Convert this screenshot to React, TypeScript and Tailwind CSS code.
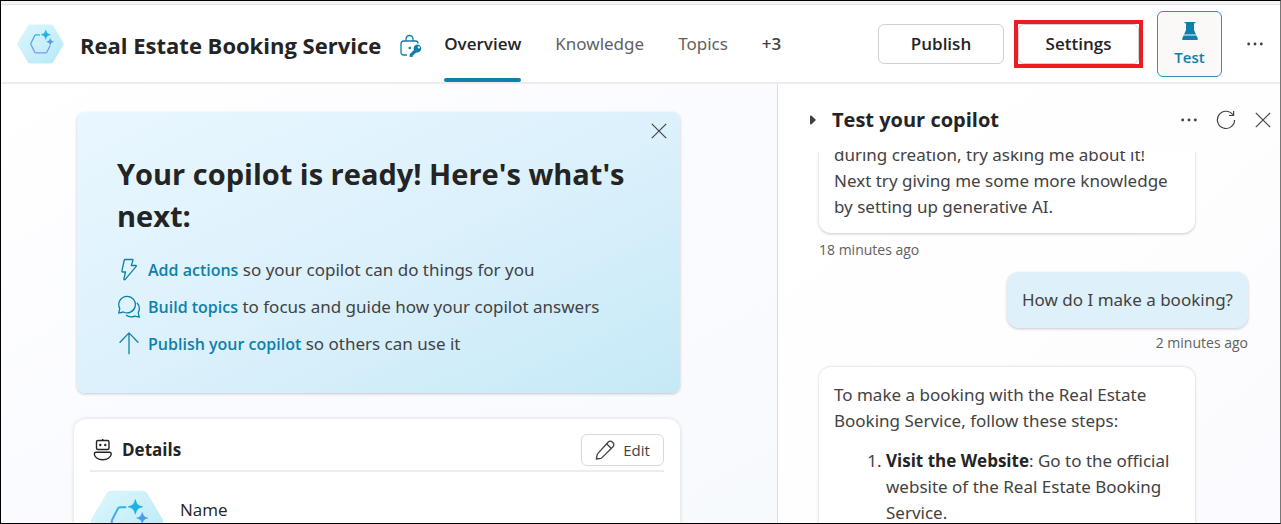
import type { ReactNode } from "react";

type IconProps = { className?: string };

function CopilotLogo({ className, id }: IconProps & { id: string }) {
  return (
    <svg viewBox="0 0 47 40" className={className} aria-hidden="true">
      <defs>
        <linearGradient id={`${id}-bg`} x1="0" y1="0" x2="1" y2="1">
          <stop offset="0" stopColor="#def6fc" />
          <stop offset="1" stopColor="#b5e9f8" />
        </linearGradient>
        <linearGradient id={`${id}-line`} x1="0" y1="0" x2="0" y2="1">
          <stop offset="0" stopColor="#2db4e6" />
          <stop offset="1" stopColor="#8b8ff5" />
        </linearGradient>
      </defs>
      <path
        d="M13.5 0.5h20c1.4 0 2.3.5 3 1.700l9.500 16c.6 1.200.6 2.400 0 3.600l-9.500 16c-.7 1.200-1.600 1.700-3 1.700h-20c-1.400 0-2.300-.5-3-1.700l-9.500-16c-.6-1.200-.6-2.400 0-3.600l9.500-16c.7-1.200 1.600-1.700 3-1.700z"
        fill={`url(#${id}-bg)`}
      />
      <path
        d="M22.500 10.900h-3.300c-.7 0-1.200.3-1.500.9l-3.700 7.200c-.3.600-.3 1.200 0 1.800l3.700 7.200c.3.600.8.900 1.500.9h9.200c.7 0 1.200-.3 1.500-.9l3-6"
        fill="none"
        stroke={`url(#${id}-line)`}
        strokeWidth="1.300"
        strokeLinecap="round"
      />
      <path
        d="M28.800 6.100c.8 3 1.500 3.800 4.600 4.600-3.100.8-3.800 1.600-4.600 4.600-.8-3-1.500-3.800-4.600-4.600 3.100-.8 3.800-1.600 4.600-4.600z"
        fill="#21b0e3"
        stroke="#21b0e3"
        strokeWidth="0.500"
      />
      <path
        d="M33.200 14.300c.6 2.300 1.200 2.900 3.500 3.500-2.300.6-2.900 1.200-3.500 3.500-.6-2.300-1.200-2.900-3.500-3.500 2.300-.6 2.900-1.200 3.500-3.500z"
        fill="#4a9bea"
        stroke="#4a9bea"
        strokeWidth="0.400"
      />
    </svg>
  );
}

function LockKeyIcon({ className }: IconProps) {
  return (
    <svg viewBox="0 0 24 24" className={className} fill="none" aria-hidden="true">
      <path
        d="M8 21H4.500A2.500 2.500 0 0 1 2 18.500v-9A2.500 2.500 0 0 1 4.500 7h12A2.500 2.500 0 0 1 19 9.500M7 7V5a3.500 3.500 0 0 1 7 0v2"
        stroke="currentColor"
        strokeWidth="1.300"
      />
      <circle cx="10.800" cy="14" r="1.300" fill="currentColor" />
      <path
        fillRule="evenodd"
        d="M18.500 10.500a4 4 0 1 1-1.100 7.900L16 19.800h-.9v1.400h-1.400v1.300c0 .3-.2.500-.5.500h-2c-.3 0-.5-.2-.5-.5v-2.200l4.200-4.300a4 4 0 0 1 3.600-5.500zm1.300 1.800a1.100 1.100 0 1 0 0 2.200 1.100 1.100 0 0 0 0-2.200z"
        fill="currentColor"
      />
    </svg>
  );
}

function BeakerIcon({ className }: IconProps) {
  return (
    <svg viewBox="0 0 20 20" className={className} fill="currentColor" aria-hidden="true">
      <path d="M4.500 1h11v1.300H14V9l2 4.500H4L6 9V2.300H4.500z" />
      <path d="M3.500 14.500h13l1.300 3c.3.800-.2 1.500-1 1.500H3.200c-.8 0-1.300-.7-1-1.500z" />
    </svg>
  );
}

function MoreIcon({ className }: IconProps) {
  return (
    <svg viewBox="0 0 20 20" className={className} fill="currentColor" aria-hidden="true">
      <circle cx="3" cy="10" r="1.600" />
      <circle cx="10" cy="10" r="1.600" />
      <circle cx="17" cy="10" r="1.600" />
    </svg>
  );
}

function CloseIcon({ className }: IconProps) {
  return (
    <svg viewBox="0 0 20 20" className={className} fill="none" stroke="currentColor" strokeWidth="1.300" aria-hidden="true">
      <path d="M2 2l16 16M18 2L2 18" />
    </svg>
  );
}

function RefreshIcon({ className }: IconProps) {
  return (
    <svg viewBox="0 0 20 20" className={className} fill="none" stroke="currentColor" strokeWidth="1.200" aria-hidden="true">
      <path d="M16.800 4.600A8.600 8.600 0 1 0 18.600 10" />
      <path d="M17.600 1v4.500H13" />
    </svg>
  );
}

function BoltIcon({ className }: IconProps) {
  return (
    <svg viewBox="0 0 24 24" className={className} fill="none" stroke="currentColor" strokeWidth="1.300" strokeLinejoin="round" aria-hidden="true">
      <path d="M8 1.500h7.500c.4 0 .6.300.5.600L14.300 7.500h4.500c.5 0 .7.500.4.900L8 21.600c-.5.500-1.300.1-1.100-.6L8.500 14H5.700c-.6 0-1-.5-.8-1.100L7.300 2C7.400 1.700 7.700 1.500 8 1.500z" />
    </svg>
  );
}

function ChatIcon({ className }: IconProps) {
  return (
    <svg viewBox="0 0 24 24" className={className} fill="none" stroke="currentColor" strokeWidth="1.300" strokeLinejoin="round" aria-hidden="true">
      <path d="M10 1.300a8.300 8.300 0 1 1-3.700 15.700L1.700 18.100l1.100-4.500A8.300 8.300 0 0 1 10 1.300z" />
      <path d="M9 20c1.400 1.200 3.200 1.900 5.200 1.900 1.300 0 2.500-.3 3.600-.8l4.500 1-1.100-4.400c1.700-3.400 1.300-7.300-1.300-9.900" />
    </svg>
  );
}

function ArrowUpIcon({ className }: IconProps) {
  return (
    <svg viewBox="0 0 24 24" className={className} fill="none" stroke="currentColor" strokeWidth="1.300" strokeLinecap="round" strokeLinejoin="round" aria-hidden="true">
      <path d="M12 21.700V1.200M3 10.200l9-9.300 9 9.300" />
    </svg>
  );
}

function BotIcon({ className }: IconProps) {
  return (
    <svg viewBox="0 0 24 24" className={className} fill="none" stroke="currentColor" strokeWidth="1.400" aria-hidden="true">
      <rect x="6.500" y="2.500" width="12.500" height="9" rx="1.500" />
      <path d="M12.700 1v1.500" />
      <path d="M6 14.300h13.500c1 0 1.700.7 1.700 1.700 0 3-3.600 5.800-8.500 5.800S4.300 19 4.300 16c0-1 .7-1.700 1.700-1.700z" />
      <circle cx="10.300" cy="7" r="1.200" fill="currentColor" stroke="none" />
      <circle cx="15.300" cy="7" r="1.200" fill="currentColor" stroke="none" />
    </svg>
  );
}

function PencilIcon({ className }: IconProps) {
  return (
    <svg viewBox="0 0 20 20" className={className} fill="none" stroke="currentColor" strokeWidth="1.300" strokeLinejoin="round" aria-hidden="true">
      <path d="M13.300 2a2.700 2.700 0 0 1 3.900 0l.8.800a2.700 2.700 0 0 1 0 3.900L7 17.600c-.4.400-.9.700-1.400.800L1.300 19l.9-4.200c.1-.5.400-1 .8-1.400z" />
      <path d="M11.600 3.800l4.700 4.700" />
    </svg>
  );
}

const steps: { icon: ReactNode; link: string; text: string }[] = [
  { icon: <BoltIcon className="size-6" />, link: "Add actions", text: "so your copilot can do things for you" },
  { icon: <ChatIcon className="size-6" />, link: "Build topics", text: "to focus and guide how your copilot answers" },
  { icon: <ArrowUpIcon className="size-6" />, link: "Publish your copilot", text: "so others can use it" },
];

function Header() {
  return (
    <header className="flex h-[79px] shrink-0 items-stretch border-b-2 border-[#ededed] bg-white pl-4 pr-4">
      <div className="flex items-center">
        <CopilotLogo id="brand" className="h-10 w-[47px]" />
        <h1 className="ml-4 whitespace-nowrap pt-[3px] text-[22px] font-bold text-[#242424]">Real Estate Booking Service</h1>
        <LockKeyIcon className="ml-[18px] mt-1 size-6 text-[#0f7fa8]" />
      </div>
      <nav className="ml-[21px] flex items-stretch gap-[34px] whitespace-nowrap text-[17px] text-[#616161]" aria-label="Copilot sections">
        <a href="#overview" className="flex flex-col justify-between pt-[26px] font-['Open_Sans',sans-serif] font-semibold text-[#242424]" aria-current="page">
          Overview
          <span className="h-1 rounded-full bg-[#0f80aa]" />
        </a>
        <a href="#knowledge" className="flex items-center font-['Noto_Sans',sans-serif]">Knowledge</a>
        <a href="#topics" className="flex items-center font-['Noto_Sans',sans-serif]">Topics</a>
        <button type="button" className="font-semibold text-[#424242]">+3</button>
      </nav>
      <div className="ml-auto flex items-center text-[17px] font-semibold text-[#242424]">
        <button type="button" className="h-10 w-[126px] rounded-md border border-[#d1d1d1] bg-white">Publish</button>
        <div className="ml-[10px] border-4 border-[#ec1c24]">
          <button type="button" className="block h-10 w-[121px] rounded-md border border-[#d1d1d1] bg-white">Settings</button>
        </div>
        <button type="button" className="ml-[14px] flex h-[66px] w-[65px] flex-col items-center justify-center gap-[5px] rounded-md border border-[#2f93b8] bg-[#faf9f8] pt-[2px] text-[15px] text-[#0f80aa]">
          <BeakerIcon className="size-5" />
          <span>Test</span>
        </button>
        <button type="button" aria-label="More options" className="ml-6 text-[#424242]">
          <MoreIcon className="size-[18px]" />
        </button>
      </div>
    </header>
  );
}

function Overview() {
  return (
    <main className="min-w-0 flex-1 overflow-hidden bg-linear-to-br from-white via-[#fafbff] to-[#f7fafd] pl-[73px] pr-[97px] pt-7">
      <section className="ml-[3px] flex items-start rounded-lg bg-linear-to-br from-[#e9f7ff] via-[#dcf1fc] to-[#c6e9f7] pb-[31px] pl-10 pr-3 pt-[10px] shadow-[0_1px_3px_rgba(0,0,0,0.22)]">
        <div className="flex-1 pt-[31px]">
          <h2 className="text-[29px] font-bold leading-[42px] text-[#242424]">Your copilot is ready! Here's what's next:</h2>
          <ul className="mt-[14px] text-[17px] leading-[37px] text-[#424242]">
            {steps.map((step) => (
              <li key={step.link} className="flex items-center gap-[7px]">
                <span className="text-[#0f80aa]">{step.icon}</span>
                <span className="font-['Noto_Sans',sans-serif]">
                  <a href="#next" className="font-['Open_Sans',sans-serif] text-base font-semibold text-[#0f80aa]">{step.link}</a> {step.text}
                </span>
              </li>
            ))}
          </ul>
        </div>
        <button type="button" aria-label="Dismiss" className="text-[#424242]">
          <CloseIcon className="size-[18px]" />
        </button>
      </section>
      <section className="mt-[26px] h-60 rounded-xl bg-white px-4 pt-[15px] shadow-[0_0_4px_rgba(0,0,0,0.14)]">
        <div className="flex items-center justify-between border-b-2 border-[#ededed] pb-1">
          <h3 className="flex items-center gap-2 text-[17px] font-bold text-[#242424]">
            <BotIcon className="size-6" />
            Details
          </h3>
          <button type="button" className="flex h-8 w-[83px] items-center justify-center gap-2 rounded-md border border-[#d9d9d9] text-[15px] text-[#424242]">
            <PencilIcon className="size-5" />
            Edit
          </button>
        </div>
        <div className="flex items-start gap-4 pt-[18px]">
          <CopilotLogo id="details" className="h-[63px] w-[74px]" />
          <p className="pt-2 text-[17px] font-medium leading-6 text-[#242424]">Name</p>
        </div>
      </section>
    </main>
  );
}

function TestPane() {
  return (
    <aside className="flex w-[503px] shrink-0 flex-col overflow-hidden border-l border-[#dedede] bg-linear-to-br from-white via-[#fefefe] to-[#fafaff]">
      <div className="flex h-[67px] shrink-0 items-center pl-8 pr-2 pt-[5px] text-[#424242]">
        <svg viewBox="0 0 6 10" className="h-[10px] w-[6px]" fill="currentColor" aria-hidden="true">
          <path d="M0 1.500c0-1 .8-1.300 1.500-.7l3.800 3.500c.5.400.5 1 0 1.400L1.500 9.200C.8 9.800 0 9.500 0 8.500z" />
        </svg>
        <h2 className="ml-4 text-xl font-bold text-[#242424]">Test your copilot</h2>
        <div className="ml-auto flex items-center gap-[18px]">
          <button type="button" aria-label="More test options"><MoreIcon className="size-[18px]" /></button>
          <button type="button" aria-label="Restart conversation"><RefreshIcon className="size-5" /></button>
          <button type="button" aria-label="Close test pane"><CloseIcon className="size-[18px]" /></button>
        </div>
      </div>
      <div className="flex min-h-0 flex-1 flex-col overflow-hidden pl-[41px] pr-8 font-['Noto_Sans',sans-serif] text-[17px] leading-[26px] text-[#424242]">
        <div className="w-[376px] shrink-0 overflow-hidden rounded-b-xl bg-white px-[15px] pb-[13px] shadow-[0_1px_3px_rgba(0,0,0,0.22)]">
          <p className="-mt-[9px]">
            during creation, try asking me about it! Next try giving me some more knowledge by setting up generative AI.
          </p>
        </div>
        <p className="mt-[7px] font-['Open_Sans',sans-serif] text-sm leading-5 text-[#616161]">18 minutes ago</p>
        <div className="mt-3 shrink-0 self-end rounded-xl bg-[#def1fb] p-[15px] shadow-[0_1px_3px_rgba(0,0,0,0.22)]">How do I make a booking?</div>
        <p className="mt-[5px] self-end font-['Open_Sans',sans-serif] text-sm leading-5 text-[#616161]">2 minutes ago</p>
        <div className="mt-[14px] w-[376px] shrink-0 rounded-xl bg-white p-[15px] shadow-[0_0_3px_rgba(0,0,0,0.2)]">
          <p>To make a booking with the Real Estate Booking Service, follow these steps:</p>
          <ol className="mt-[14px] list-decimal pl-[52px]">
            <li>
              <strong className="font-['Open_Sans',sans-serif] font-bold text-[#242424]">Visit the Website</strong>: Go to the official website of the Real Estate Booking Service.
            </li>
          </ol>
        </div>
      </div>
    </aside>
  );
}

export default function App() {
  return (
    <div className="flex h-screen flex-col overflow-hidden border border-black border-r-[#777777] bg-white font-['Open_Sans','Noto_Sans',sans-serif]">
      <div className="h-1 shrink-0 border-b border-[#e6e1e4] bg-[#f7f2f5]" />
      <Header />
      <div className="flex min-h-0 flex-1">
        <Overview />
        <TestPane />
      </div>
    </div>
  );
}
